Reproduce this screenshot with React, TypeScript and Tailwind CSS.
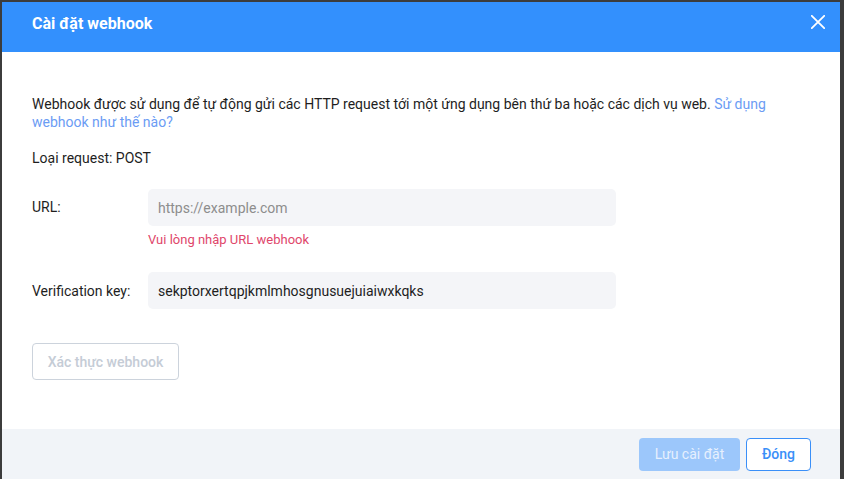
export default function App() {
  return (
    <div
      className="h-[479px] w-[844px] overflow-hidden bg-[#3c3c3c] pl-[2px] pt-[2px]"
      style={{ fontFamily: "Roboto, 'Noto Sans', sans-serif" }}
    >
      <div className="flex h-[490px] w-[838px] flex-col bg-white">
        {/* Header */}
        <div className="flex h-[50px] shrink-0 items-start bg-[#3390fd] pl-[30px] pr-[15px]">
          <h2 className="mt-[10px] flex-1 text-[16px] leading-[24px] font-bold text-white">Cài đặt webhook</h2>
          <button className="mt-[13px] flex h-[14px] w-[14px] items-center justify-center">
            <svg width="14" height="14" viewBox="0 0 14 14" fill="none">
              <path d="M0.8 0.8L13.2 13.2M13.2 0.8L0.8 13.2" stroke="white" strokeWidth="1.8" strokeLinecap="round" />
            </svg>
          </button>
        </div>

        {/* Body */}
        <div className="h-[377px] shrink-0 px-[30px] pt-[43px] text-[14px] leading-[18px] text-[#1e1e1e]">
          <p>
            Webhook được sử dụng để tự động gửi các HTTP request tới một ứng dụng bên thứ ba hoặc các dịch vụ web.{" "}
            <a className="text-[#6b9cf4]">Sử dụng webhook như thế nào?</a>
          </p>
          <p className="mt-[18px]">Loại request: POST</p>

          <div className="mt-[22px] flex">
            <label className="w-[116px] shrink-0 pt-[9px]">URL:</label>
            <div className="flex flex-col">
              <input
                className="h-[37px] w-[468px] rounded-[5px] bg-[#f4f5f8] px-[10px] text-[14px] text-[#1e1e1e] outline-none placeholder:text-[#8d8d8d]"
                placeholder="https://example.com"
              />
              <span className="mt-[6px] text-[13px] leading-[16px] text-[#e0466b]">Vui lòng nhập URL webhook</span>
            </div>
          </div>

          <div className="mt-[24px] flex items-center">
            <label className="w-[116px] shrink-0">Verification key:</label>
            <input
              className="h-[37px] w-[468px] rounded-[5px] bg-[#f4f5f8] px-[10px] text-[14px] text-[#1e1e1e] outline-none"
              defaultValue="sekptorxertqpjkmlmhosgnusuejuiaiwxkqks"
            />
          </div>

          <button className="mt-[34px] h-[37px] w-[147px] rounded-[4px] border border-[#ccd3dc] text-[14px] font-medium text-[#c5ccd6]">
            Xác thực webhook
          </button>
        </div>

        {/* Footer */}
        <div className="flex flex-1 justify-end gap-[6px] bg-[#f1f4f8] pr-[29px] pt-[9px]">
          <button className="h-[33px] w-[101px] rounded-[4px] bg-[#9cc7fb] text-[14px] text-[#e6f0fe]">
            Lưu cài đặt
          </button>
          <button className="h-[33px] w-[65px] rounded-[4px] border border-[#3a8ff8] bg-white text-[14px] font-medium text-[#3a8ff8]">
            Đóng
          </button>
        </div>
      </div>
    </div>
  );
}
